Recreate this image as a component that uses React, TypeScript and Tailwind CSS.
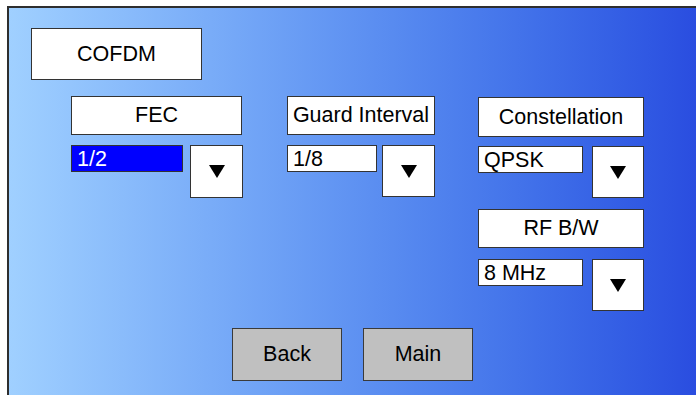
const font = { fontFamily: '"Liberation Sans", Arial, sans-serif' };

function Label({ text, className }: { text: string; className: string }) {
    return (
        <div className={`flex items-center justify-center bg-white border border-[#333] text-[21.5px] text-black ${className}`}>
            {text}
        </div>
    );
}

function Value({ text, className, selected }: { text: string; className: string; selected?: boolean }) {
    return (
        <div
            className={`h-[27px] border border-[#333] pl-[5px] pt-[1px] text-[21.5px] leading-[24px] ${
                selected ? 'bg-[#0000ff] text-white' : 'bg-white text-black'
            } ${className}`}
        >
            {text}
        </div>
    );
}

function DropButton({ className }: { className: string }) {
    return (
        <div className={`flex items-center justify-center bg-white border border-[#333] ${className}`}>
            <svg width="16" height="13" viewBox="0 0 16 13">
                <polygon points="0,0 16,0 8,13" fill="#000" />
            </svg>
        </div>
    );
}

export default function App() {
    return (
        <div className="w-[696px] h-[395px] bg-white overflow-hidden" style={font}>
            <div className="ml-[7px] mt-[6px] w-[689px] h-[389px] border-l-2 border-t-2 border-[#2e2e2e] bg-gradient-to-r from-[#a0d0ff] to-[#2a4de0] pl-[22px] pt-[20px]">
                <Label text="COFDM" className="w-[171px] h-[52px]" />

                <div className="flex mt-[16px] ml-[40px]">
                    {/* FEC */}
                    <div className="flex flex-col w-[172px]">
                        <Label text="FEC" className="w-[171px] h-[39px]" />
                        <div className="flex items-start mt-[10px]">
                            <Value text="1/2" selected className="w-[112px]" />
                            <DropButton className="ml-[7px] w-[53px] h-[53px]" />
                        </div>
                    </div>

                    {/* Guard Interval */}
                    <div className="flex flex-col w-[148px] ml-[44px]">
                        <Label text="Guard Interval" className="w-[148px] h-[39px]" />
                        <div className="flex items-start mt-[10px]">
                            <Value text="1/8" className="w-[90px]" />
                            <DropButton className="ml-[5px] w-[53px] h-[52px]" />
                        </div>
                    </div>

                    {/* Constellation / RF B/W */}
                    <div className="flex flex-col w-[166px] ml-[43px]">
                        <Label text="Constellation" className="w-[166px] h-[40px] mt-px" />
                        <div className="flex items-start mt-[9px]">
                            <Value text="QPSK" className="w-[105px]" />
                            <DropButton className="ml-[9px] w-[52px] h-[52px]" />
                        </div>
                        <Label text="RF B/W" className="w-[166px] h-[39px] mt-[11px]" />
                        <div className="flex items-start mt-[11px]">
                            <Value text="8 MHz" className="w-[105px] h-[26px]" />
                            <DropButton className="ml-[9px] w-[52px] h-[52px]" />
                        </div>
                    </div>
                </div>

                <div className="flex justify-center gap-[21px] mt-[17px] -ml-[22px]">
                    <div className="flex items-center justify-center w-[110px] h-[53px] bg-[#c0c0c0] border border-[#3a3a3a] text-[21.5px] text-black">
                        Back
                    </div>
                    <div className="flex items-center justify-center w-[110px] h-[53px] bg-[#c0c0c0] border border-[#3a3a3a] text-[21.5px] text-black">
                        Main
                    </div>
                </div>
            </div>
        </div>
    );
}
